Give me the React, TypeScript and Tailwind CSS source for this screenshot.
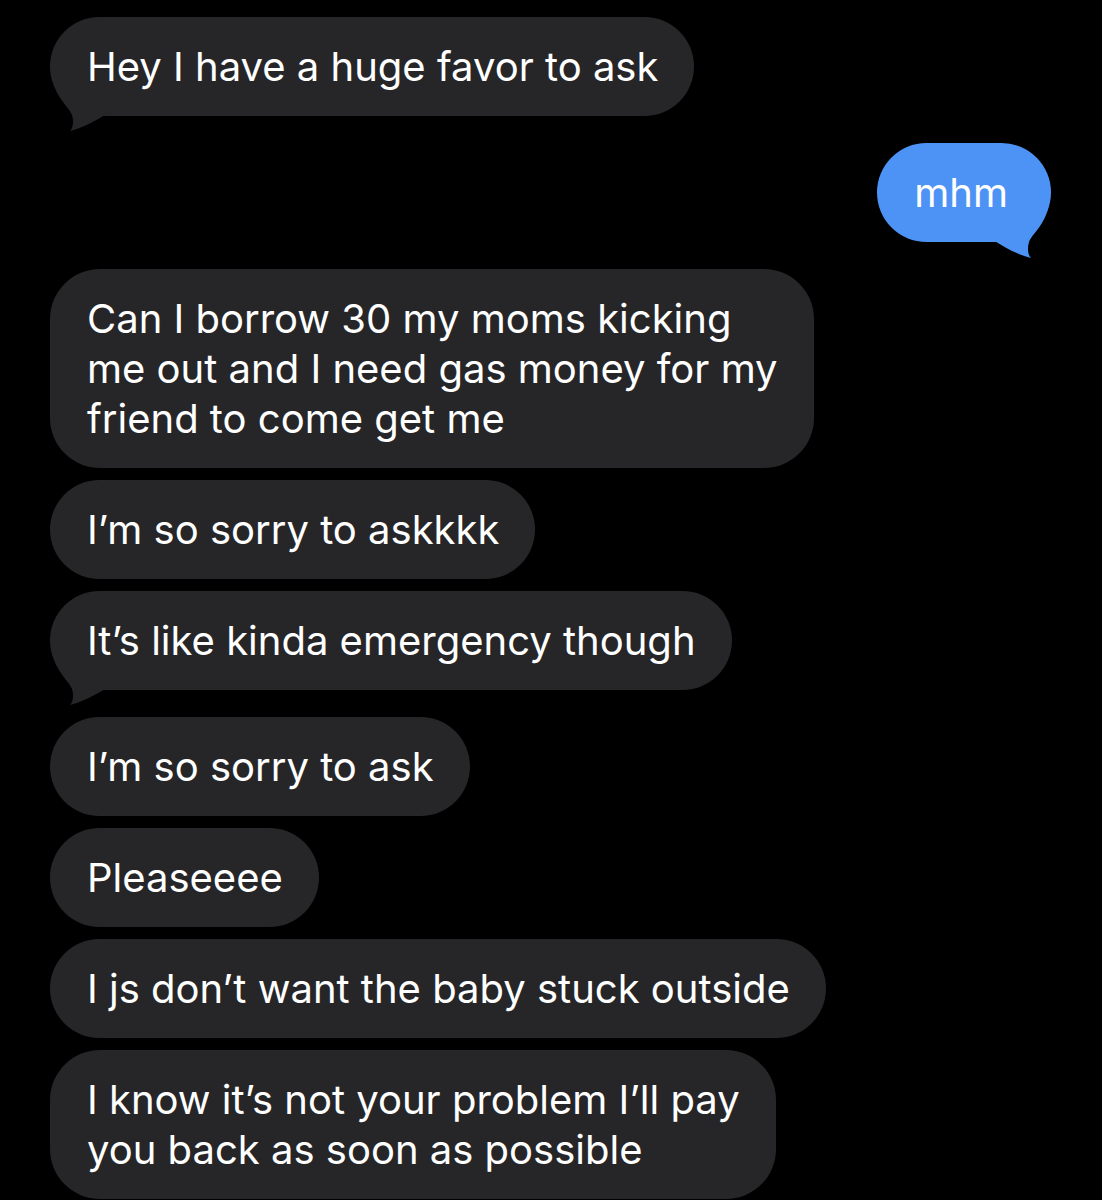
import React from "react";

type Msg = { text: string[]; me?: boolean; tail?: boolean };

const messages: Msg[] = [
  { text: ["Hey I have a huge favor to ask"], tail: true },
  { text: ["mhm"], me: true, tail: true },
  { text: ["Can I borrow 30 my moms kicking", "me out and I need gas money for my", "friend to come get me"] },
  { text: ["I’m so sorry to askkkk"] },
  { text: ["It’s like kinda emergency though"], tail: true },
  { text: ["I’m so sorry to ask"] },
  { text: ["Pleaseeee"] },
  { text: ["I js don’t want the baby stuck outside"] },
  { text: ["I know it’s not your problem I’ll pay", "you back as soon as possible"] },
];

const Tail = ({ me }: { me?: boolean }) => (
  <svg
    width="64"
    height="60"
    viewBox="0 0 64 60"
    className={
      me
        ? "absolute right-0 bottom-[-18px] -scale-x-100 fill-[#4d93f5]"
        : "absolute left-0 bottom-[-17px] fill-[#262629]"
    }
  >
    <path d="M3 8 C7 26 19 34 22 42 C24 49 23 55 20 58 C32 55 44 49 58 40 L62 8 Z" />
  </svg>
);

const Bubble = ({ msg }: { msg: Msg }) => (
  <div className={msg.me ? "flex justify-end" : "flex justify-start"}>
    <div
      className={
        msg.me
          ? "relative rounded-[50px] bg-[#4d93f5] pl-[37px] pr-[43px] py-[24.5px] text-[40px] leading-[50px] text-white"
          : "relative rounded-[50px] bg-[#262629] pl-[37px] pr-[36px] py-[24.5px] text-[40px] leading-[50px] text-white"
      }
    >
      {msg.tail && <Tail me={msg.me} />}
      <div className="relative whitespace-nowrap">
        {msg.text.map((line, i) => (
          <div key={i}>{line}</div>
        ))}
      </div>
    </div>
  </div>
);

export default function App() {
  return (
    <div
      className="min-h-[1200px] w-full overflow-hidden bg-black pt-[17px] pl-[50px] pr-[51px]"
      style={{ fontFamily: "Inter, 'Noto Sans', sans-serif" }}
    >
      <div className="flex flex-col">
        {messages.map((m, i) => (
          <div key={i} className={messages[i - 1]?.tail ? "mt-[27px]" : i === 0 ? "" : "mt-[12px]"}>
            <Bubble msg={m} />
          </div>
        ))}
      </div>
    </div>
  );
}
